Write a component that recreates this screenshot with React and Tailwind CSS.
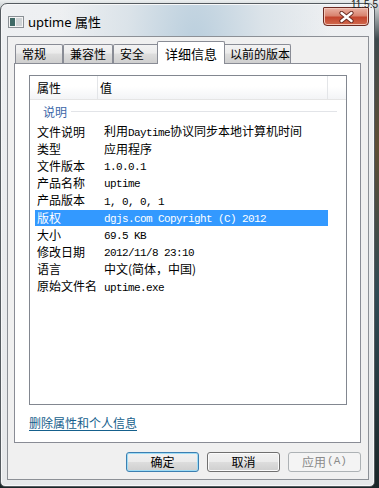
import React from "react";

const CJK = { fontFamily: '"Noto Sans CJK SC", "Noto Sans", sans-serif' };

function Mono({ children }) {
  return (
    <span className="text-[11px] tracking-[-0.6px]" style={{ fontFamily: '"Liberation Mono", "Noto Sans CJK SC", monospace' }}>
      {children}
    </span>
  );
}

const rows = [
  ["文件说明", <span>利用<Mono>Daytime</Mono>协议同步本地计算机时间</span>],
  ["类型", <span>应用程序</span>],
  ["文件版本", <Mono>1.0.0.1</Mono>],
  ["产品名称", <Mono>uptime</Mono>],
  ["产品版本", <Mono>1, 0, 0, 1</Mono>],
  ["版权", <Mono>dgjs.com Copyright (C) 2012</Mono>, true],
  ["大小", <Mono>69.5 KB</Mono>],
  ["修改日期", <Mono>2012/11/8 23:10</Mono>],
  ["语言", <span>中文(简体，中国)</span>],
  ["原始文件名", <Mono>uptime.exe</Mono>],
];

function Tab({ label, w, selected }) {
  if (selected) {
    return (
      <div
        className={`${w} h-[23px] -mx-[2px] relative z-20 bg-white border border-b-0 border-[#898c95] rounded-t-[2px] flex items-start justify-center pt-[2px] text-[13px] text-black`}
      >
        {label}
      </div>
    );
  }
  return (
    <div
      className={`${w} h-[19px] mb-[1px] bg-[linear-gradient(#f3f3f3,#ebebeb_45%,#dddddd_50%,#cfcfcf)] border border-b-0 border-[#898c95] rounded-t-[2px] flex items-center justify-start pl-[6px] text-[12px] text-black`}
    >
      {label}
    </div>
  );
}

function Button({ children, def, disabled }) {
  if (disabled) {
    return (
      <div className="w-[73px] h-[20px] rounded-[3px] border border-[#adb2b5] bg-[#f4f4f4] flex items-center justify-center text-[12px] text-[#8a8a8a]">
        {children}
      </div>
    );
  }
  return (
    <div
      className={`w-[73px] h-[20px] rounded-[3px] border ${def ? "border-[#3c7fb1] shadow-[inset_0_0_0_1px_#9fdcf5]" : "border-[#707070] shadow-[inset_0_0_0_1px_#fbfbfb]"} bg-[linear-gradient(#f2f2f2,#ebebeb_48%,#dddddd_50%,#cfcfcf)] flex items-center justify-center text-[12px] text-black`}
    >
      {children}
    </div>
  );
}

export default function App() {
  return (
    <div
      className="w-[379px] h-[488px] overflow-hidden relative flex bg-[linear-gradient(#eceff0_0%,#3d4a4e_8%,#5e4e34_30%,#2f4a54_60%,#1a2628_100%)]"
      style={CJK}
    >
      <div className="absolute top-0 right-[1px] text-[10px] leading-[10px] text-[#222] z-30" style={{ fontFamily: '"Liberation Sans", sans-serif' }}>
        11.5.5
      </div>
      {/* window */}
      <div className="mt-[3px] w-[375px] h-[484px] rounded-t-[7px] rounded-b-[5px] border border-[#555b60] flex flex-col bg-[radial-gradient(ellipse_at_52%_10%,#b9cedd_0%,#dbe3e9_25%,transparent_50%),linear-gradient(#eef0f2,#e6e8ea)] shadow-[inset_0_0_0_1px_#f7f8f9]">
        {/* title bar */}
        <div className="h-[32px] flex items-start">
          <div className="flex items-center h-[32px] pl-[7px] pt-[4px] gap-[4px]">
            <svg width="16" height="12" viewBox="0 0 16 12">
              <rect x="0.5" y="0.5" width="15" height="11" fill="#f4f4f4" stroke="#8a9095" />
              <rect x="2" y="2" width="5" height="8" fill="#3f6a66" />
              <rect x="8" y="2" width="6" height="8" fill="#cfd4d6" />
            </svg>
            <span className="text-[13px] text-black" style={{ fontFamily: '"Noto Sans", "Noto Sans CJK SC", sans-serif' }}>
              uptime <span style={CJK}>属性</span>
            </span>
          </div>
          <div className="ml-auto mr-[5px] mt-[3px] w-[46px] h-[19px] rounded-b-[4px] rounded-t-[1px] border border-[#6b2a22] bg-[linear-gradient(#eab2a4,#d98470_45%,#c4452e_55%,#d06a4e)] shadow-[inset_0_0_0_1px_#f3c6b8] flex items-center justify-center">
            <svg width="15" height="12" viewBox="0 0 15 12">
              <path d="M2.5 2 L12.5 10 M12.5 2 L2.5 10" stroke="#6a2a20" strokeWidth="4.2" strokeLinecap="round" />
              <path d="M2.5 2 L12.5 10 M12.5 2 L2.5 10" stroke="#ffffff" strokeWidth="2.4" strokeLinecap="round" />
            </svg>
          </div>
        </div>
        {/* client */}
        <div className="mb-[6px] ml-[6px] mr-[5px] flex-1 bg-[#f0f0f0] border border-[#8c9096] flex flex-col pl-[6px] pr-[7px] pt-[5px]">
          {/* tabs */}
          <div className="flex items-end h-[22px] -mb-[1px] relative z-10 pl-[1px]">
            <Tab label="常规" w="w-[48px]" />
            <Tab label="兼容性" w="w-[50px]" />
            <Tab label="安全" w="w-[46px]" />
            <Tab label="详细信息" w="w-[68px]" selected />
            <Tab label="以前的版本" w="w-[68px]" />
          </div>
          {/* panel */}
          <div className="h-[380px] bg-white border border-[#898c95] flex flex-col pt-[11px] pl-[14px] pr-[13px]">
            <div className="h-[330px] border border-[#828790] bg-white flex flex-col">
              {/* header */}
              <div className="h-[24px] flex border-b border-[#e5e5e5] bg-[linear-gradient(#ffffff,#ffffff_45%,#f3f4f6)] text-[12px] text-black">
                <div className="w-[68px] border-r border-[#e3e5e8] flex items-center pl-[7px]">属性</div>
                <div className="w-[230px] border-r border-[#e3e5e8] flex items-center pl-[2px]">值</div>
                <div className="flex-1" />
              </div>
              {/* group */}
              <div className="h-[23px] flex items-center pl-[13px] pr-[9px] gap-[4px]">
                <span className="text-[12px] text-[#3a66a8]">说明</span>
                <div className="flex-1 h-px bg-[#e2e4e8]" />
              </div>
              {rows.map(([k, v, sel], i) => (
                <div key={i} className="h-[17.2px] flex items-center pl-[5px]">
                  <div
                    className={`w-[293px] h-[16px] flex items-center text-[12px] ${sel ? "bg-[#3399ff] text-white" : "text-black"}`}
                  >
                    <div className="w-[69px] pl-[2px] shrink-0 whitespace-nowrap">{k}</div>
                    <div className="whitespace-nowrap">{v}</div>
                  </div>
                </div>
              ))}
            </div>
            <div className="mt-[9px] text-[12px] text-[#15608c] underline underline-offset-2">删除属性和个人信息</div>
          </div>
          {/* buttons */}
          <div className="flex-1 flex items-center justify-end gap-[8px] pt-[1px]">
            <Button def>确定</Button>
            <Button>取消</Button>
            <Button disabled>
              <span>应用</span>
              <span className="text-[11px] ml-[1px]" style={{ fontFamily: '"Liberation Mono", monospace' }}>(A)</span>
            </Button>
          </div>
        </div>
      </div>
      <div className="flex-1" />
    </div>
  );
}
